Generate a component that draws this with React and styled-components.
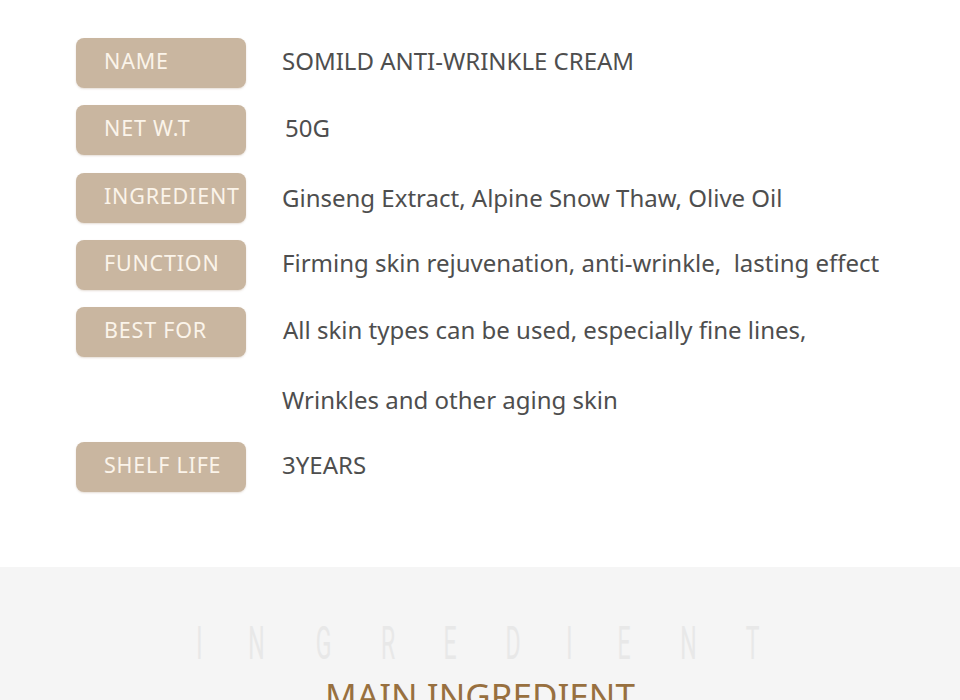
import React from 'react';
import styled, { createGlobalStyle } from 'styled-components';

const GlobalStyle = createGlobalStyle`
  html, body {
    margin: 0;
    padding: 0;
    background: #fff;
  }
  body {
    font-family: "Noto Sans", Lato, sans-serif;
    overflow: hidden;
  }
`;

const Page = styled.div`
  width: 960px;
  height: 700px;
  overflow: hidden;
`;

const SpecSection = styled.section`
  background: #fff;
  height: 567px;
  box-sizing: border-box;
  padding: 38px 0 0 76px;
`;

const SpecGrid = styled.div`
  display: grid;
  grid-template-columns: 170px 1fr;
  grid-auto-rows: 50px;
  row-gap: 17.3px;
  column-gap: 36px;
`;

const Label = styled.div`
  grid-column: 1;
  display: flex;
  align-items: center;
  padding: 0 0 5px 28px;
  border-radius: 8px;
  background: #c9b6a0;
  box-shadow: 0 1px 2px rgba(150, 120, 90, 0.25);
  color: #fbf4ea;
  font-size: 21.5px;
  letter-spacing: 0.8px;
  white-space: nowrap;
`;

const Value = styled.div`
  grid-column: 2;
  display: flex;
  align-items: center;
  padding: 0 0 ${(p) => p.$lift || 5}px ${(p) => p.$shift || 0}px;
  color: #4e4e4e;
  font-size: 24px;
  white-space: nowrap;
`;

const IngredientSection = styled.section`
  background: #f5f5f5;
  height: 133px;
  padding-top: 56px;
  box-sizing: border-box;
`;

const Watermark = styled.div`
  width: 574px;
  margin: 0 auto;
  display: flex;
  justify-content: space-between;
  height: 40px;
  align-items: center;
`;

const WaterLetter = styled.span`
  display: inline-block;
  font-family: Roboto, sans-serif;
  font-size: 46px;
  line-height: 40px;
  color: #e8e8e8;
  transform: scaleX(0.5);
  transform-origin: center;
`;

const Heading = styled.h2`
  margin: 13px 0 0;
  text-align: center;
  font-weight: 400;
  font-size: 35px;
  line-height: 40px;
  color: #98703f;
`;

const specs = [
  { label: 'NAME', value: 'SOMILD ANTI-WRINKLE CREAM' },
  { label: 'NET W.T', value: '50G', shift: 3 },
  { label: 'INGREDIENT', value: 'Ginseng Extract, Alpine Snow Thaw, Olive Oil', shift: -2, lift: 8 },
  { label: 'FUNCTION', value: 'Firming skin rejuvenation, anti-wrinkle,\u00a0 lasting effect' },
  { label: 'BEST FOR', value: 'All skin types can be used, especially fine lines,', shift: 1 },
  { label: null, value: 'Wrinkles and other aging skin', shift: -2, lift: 9 },
  { label: 'SHELF LIFE', value: '3YEARS' },
];

export default function App() {
  return (
    <Page>
      <GlobalStyle />
      <SpecSection>
        <SpecGrid>
          {specs.map((s, i) => (
            <React.Fragment key={i}>
              {s.label ? <Label style={{ gridRow: i + 1 }}>{s.label}</Label> : null}
              <Value $shift={s.shift} $lift={s.lift} style={{ gridRow: i + 1 }}>{s.value}</Value>
            </React.Fragment>
          ))}
        </SpecGrid>
      </SpecSection>
      <IngredientSection>
        <Watermark>
          {'INGREDIENT'.split('').map((c, i) => (
            <WaterLetter key={i}>{c}</WaterLetter>
          ))}
        </Watermark>
        <Heading>MAIN INGREDIENT</Heading>
      </IngredientSection>
    </Page>
  );
}
